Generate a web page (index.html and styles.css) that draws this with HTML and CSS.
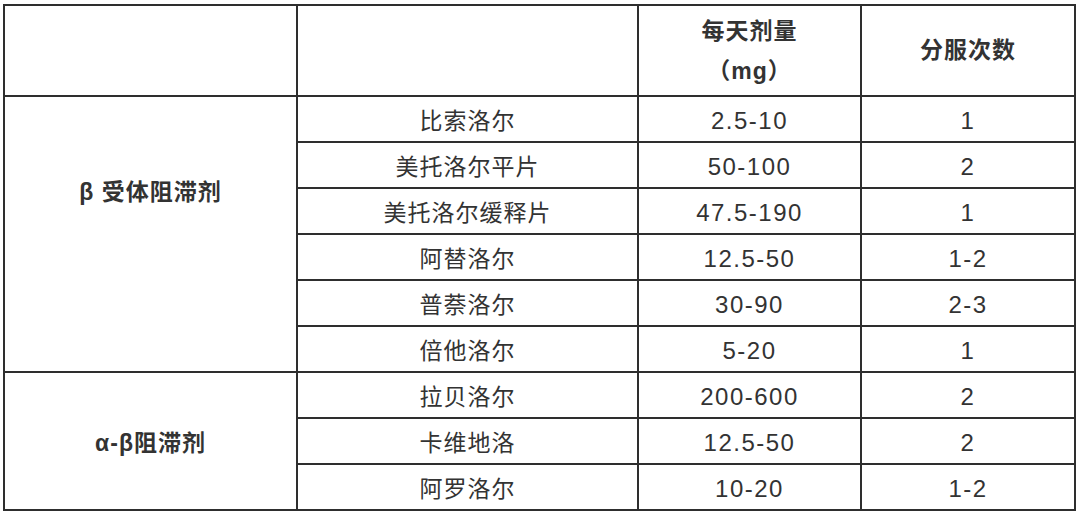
FILE: index.html
```html
<!DOCTYPE html>
<html lang="zh-CN">
<head>
<meta charset="utf-8">
<title>β 受体阻滞剂剂量表</title>
<link rel="stylesheet" href="styles.css">
</head>
<body>
<div class="table">
  <div class="cell head"></div>
  <div class="cell head"></div>
  <div class="cell head dose"><span>每天剂量</span><span>（mg）</span></div>
  <div class="cell head">分服次数</div>

  <div class="cell group beta">β 受体阻滞剂</div>
  <div class="cell">比索洛尔</div><div class="cell num">2.5-10</div><div class="cell num">1</div>
  <div class="cell">美托洛尔平片</div><div class="cell num">50-100</div><div class="cell num">2</div>
  <div class="cell">美托洛尔缓释片</div><div class="cell num">47.5-190</div><div class="cell num">1</div>
  <div class="cell">阿替洛尔</div><div class="cell num">12.5-50</div><div class="cell num">1-2</div>
  <div class="cell">普萘洛尔</div><div class="cell num">30-90</div><div class="cell num">2-3</div>
  <div class="cell">倍他洛尔</div><div class="cell num">5-20</div><div class="cell num">1</div>

  <div class="cell group alpha">α-β阻滞剂</div>
  <div class="cell">拉贝洛尔</div><div class="cell num">200-600</div><div class="cell num">2</div>
  <div class="cell">卡维地洛</div><div class="cell num">12.5-50</div><div class="cell num">2</div>
  <div class="cell">阿罗洛尔</div><div class="cell num">10-20</div><div class="cell num">1-2</div>
</div>
</body>
</html>
```

FILE: styles.css
```css
html, body {
  margin: 0;
  padding: 0;
  background: #ffffff;
}

body {
  font-family: "Liberation Sans", "Noto Sans CJK SC", sans-serif;
  color: #333333;
}

.table {
  margin: 4px 0 0 3px;
  width: 1073px;
  display: grid;
  grid-template-columns: 291px 339px 221px 212px;
  grid-template-rows: 89px repeat(9, 44px);
  gap: 2px;
  padding: 2px;
  box-sizing: border-box;
  background: #2e2e2e;
}

.cell {
  background: #ffffff;
  display: flex;
  align-items: center;
  justify-content: center;
  font-size: 23px;
  letter-spacing: 1px;
  line-height: 1;
  padding-top: 4px;
  box-sizing: border-box;
}

.num {
  font-size: 24px;
  letter-spacing: 1.5px;
}

.head {
  font-weight: bold;
  padding-top: 0;
}

.dose {
  flex-direction: column;
  line-height: 40px;
}

.group {
  font-weight: bold;
  grid-column: 1;
}

.beta {
  grid-row: 2 / span 6;
  align-items: flex-start;
  padding-top: 84px;
}

.alpha {
  grid-row: 8 / span 3;
}
```
